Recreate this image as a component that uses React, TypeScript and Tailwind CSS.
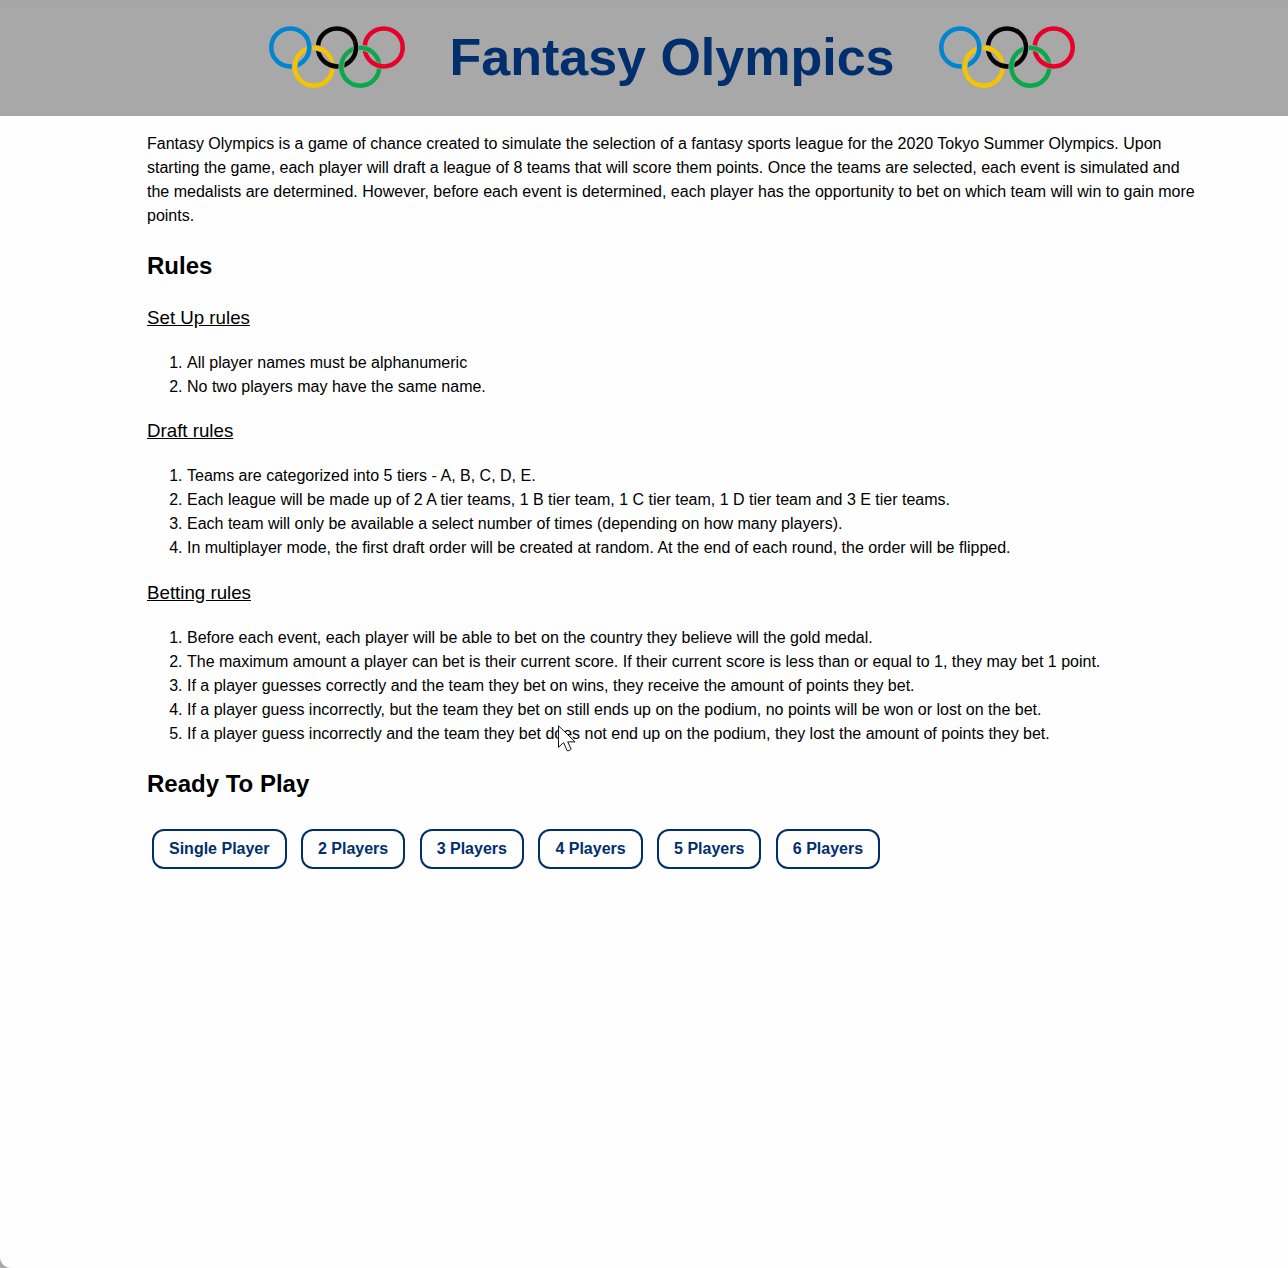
const UPPER = [
  { cx: 21.3, color: "#0085cf" },
  { cx: 68, color: "#050303" },
  { cx: 114.7, color: "#e6002a" },
];

const LOWER = [
  { cx: 44.7, color: "#f5c400" },
  { cx: 91.3, color: "#0aa84a" },
];

// Segments of the upper rings that pass over the lower ones (degrees, clockwise from the right).
const OVER = [
  { cx: 21.3, color: "#0085cf", offset: 19 },
  { cx: 68, color: "#050303", offset: 19 },
  { cx: 68, color: "#050303", offset: -86 },
  { cx: 114.7, color: "#e6002a", offset: -86 },
];

function Rings() {
  return (
    <svg viewBox="0 0 136 63" className="mt-[26px] h-[63px] w-[136px] shrink-0" fill="none">
      {UPPER.map((r) => (
        <circle key={r.cx} cx={r.cx} cy="21.4" r="19" stroke={r.color} strokeWidth="4.5" />
      ))}
      {LOWER.map((r) => (
        <g key={r.cx}>
          <circle cx={r.cx} cy="40.7" r="19" stroke="#a8a8a9" strokeWidth="6" />
          <circle cx={r.cx} cy="40.7" r="19" stroke={r.color} strokeWidth="4.5" />
        </g>
      ))}
      {OVER.map((r) => (
        <g key={`${r.cx}${r.offset}`}>
          <circle cx={r.cx} cy="21.4" r="19" stroke="#a8a8a9" strokeWidth="6" pathLength="360" strokeDasharray="36 324" strokeDashoffset={r.offset} />
          <circle cx={r.cx} cy="21.4" r="19" stroke={r.color} strokeWidth="4.5" pathLength="360" strokeDasharray="38 322" strokeDashoffset={r.offset} />
        </g>
      ))}
    </svg>
  );
}

function RuleList({ title, items }: { title: string; items: string[] }) {
  return (
    <section>
      <h3 className="mb-[18.72px] text-[18.72px] leading-[28.08px] underline">{title}</h3>
      <ol className="mb-[18.72px] list-decimal pl-10">
        {items.map((t) => (
          <li key={t}>{t}</li>
        ))}
      </ol>
    </section>
  );
}

const SETUP = ["All player names must be alphanumeric", "No two players may have the same name."];

const DRAFT = [
  "Teams are categorized into 5 tiers - A, B, C, D, E.",
  "Each league will be made up of 2 A tier teams, 1 B tier team, 1 C tier team, 1 D tier team and 3 E tier teams.",
  "Each team will only be available a select number of times (depending on how many players).",
  "In multiplayer mode, the first draft order will be created at random. At the end of each round, the order will be flipped.",
];

const BETTING = [
  "Before each event, each player will be able to bet on the country they believe will the gold medal.",
  "The maximum amount a player can bet is their current score. If their current score is less than or equal to 1, they may bet 1 point.",
  "If a player guesses correctly and the team they bet on wins, they receive the amount of points they bet.",
  "If a player guess incorrectly, but the team they bet on still ends up on the podium, no points will be won or lost on the bet.",
  "If a player guess incorrectly and the team they bet does not end up on the podium, they lost the amount of points they bet.",
];

const MODES = ["Single Player", "2 Players", "3 Players", "4 Players", "5 Players", "6 Players"];

export default function App() {
  return (
    <div className="relative h-[1268px] overflow-hidden bg-[#a8a8a8]">
      <div className="h-full rounded-bl-[11px] bg-[#fefefe] font-['Liberation_Sans',Arial,sans-serif] text-[16px] leading-6 text-black">
        <header className="flex h-[116px] items-start justify-center border-t-[7px] border-[#a5a5a5] bg-[#a8a8a9] pl-14">
          <div className="-mt-[7px]">
            <Rings />
          </div>
          <h1 className="mx-[44.5px] mt-[15px] whitespace-nowrap text-[52px] font-bold leading-[70px] text-[#012f6d]">Fantasy Olympics</h1>
          <div className="-mt-[7px]">
            <Rings />
          </div>
        </header>
        <main className="ml-[147px] w-[1051px] pt-4">
          <p>
            Fantasy Olympics is a game of chance created to simulate the selection of a fantasy sports league for the 2020 Tokyo Summer Olympics. Upon starting the game, each player will draft a league of 8 teams that will score them points. Once the teams are selected, each event is simulated and the medalists are determined. However, before each event is determined, each player has the opportunity to bet on which team will win to gain more points.
          </p>
          <h2 className="my-[19.92px] text-[24px] font-bold leading-9">Rules</h2>
          <RuleList title="Set Up rules" items={SETUP} />
          <RuleList title="Draft rules" items={DRAFT} />
          <RuleList title="Betting rules" items={BETTING} />
          <h2 className="mb-[27px] mt-[19.92px] text-[24px] font-bold leading-9">Ready To Play</h2>
          <div className="flex gap-[14.45px] pl-[5px]">
            {MODES.map((m) => (
              <button key={m} className="h-10 whitespace-nowrap rounded-[12px] border-2 border-[#012f6d] px-[15px] pt-[1px] font-bold leading-6 text-[#012f6d]">
                {m}
              </button>
            ))}
          </div>
        </main>
      </div>
      <svg className="absolute left-[558px] top-[725px] h-[28px] w-[19px]" viewBox="0 0 19 28" fill="#fff" stroke="#15151f" strokeWidth="1">
        <path d="M.5.8V22.3L5.6 17.6L9.2 25.8Q11.5 26.2 13.2 24.2L9.7 16.9H17.1Z" />
      </svg>
    </div>
  );
}
